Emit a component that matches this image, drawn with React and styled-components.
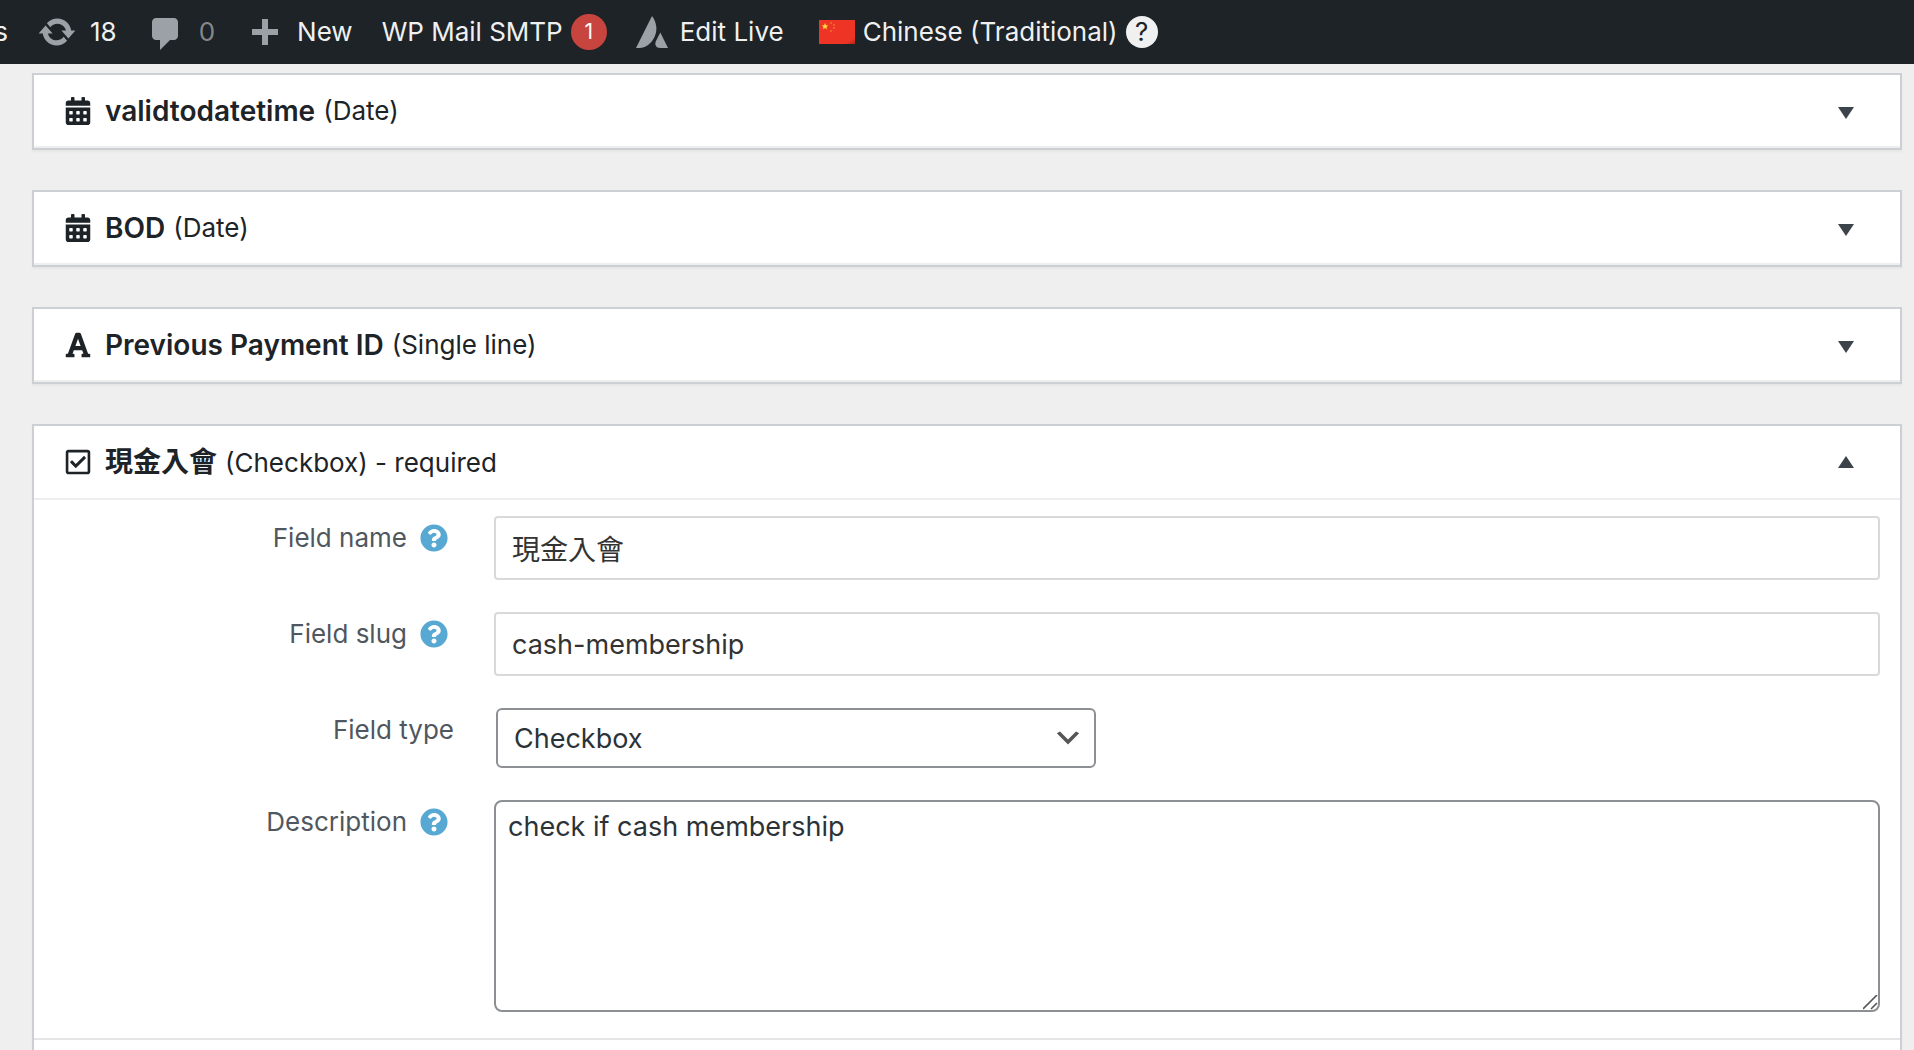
import { useState } from "react"
import styled, { createGlobalStyle, css } from "styled-components"
import { FaCalendarAlt, FaFont, FaQuestionCircle, FaRegCheckSquare } from "react-icons/fa"

const GlobalStyle = createGlobalStyle`
*, *::before, *::after {
  box-sizing: border-box;
}
body {
  margin: 0;
  background: #efefef;
  color: #1d2327;
  font-family: Inter, "Noto Sans CJK TC", sans-serif;
  font-size: 26px;
}
button, input, select, textarea {
  font-family: inherit;
}
`
const Page = styled.div`
display: flex;
flex-direction: column;
min-height: 100vh;
`
const AdminBar = styled.nav`
display: flex;
align-items: center;
gap: 29px;
height: 64px;
flex-shrink: 0;
background: #1d2327;
overflow: hidden;
white-space: nowrap;
`
const BarLink = styled.a`
display: flex;
align-items: center;
gap: ${({ $gap }) => $gap || 13}px;
color: ${({ $dim }) => ($dim ? "#84878b" : "#f0f0f1")};
line-height: 38px;
text-decoration: none;
`
const CutLink = styled(BarLink)`
justify-content: flex-end;
width: 8px;
overflow: hidden;
`
const BarIcon = styled.svg`
width: ${({ $size }) => $size || 40}px;
height: ${({ $size }) => $size || 40}px;
fill: #9ca1a7;
`
const Badge = styled.span`
width: 36px;
height: 36px;
border-radius: 50%;
background: #c8453f;
color: #fff;
font-size: 21px;
line-height: 36px;
text-align: center;
`
const Flag = styled.svg`
width: 36px;
height: 24px;
margin-left: 6px;
`
const BarHelp = styled.span`
width: 32px;
height: 32px;
border-radius: 50%;
background: #f0f0f1;
color: #1d2327;
line-height: 32px;
text-align: center;
`
const Fields = styled.main`
display: flex;
flex-direction: column;
flex-grow: 1;
gap: 40px;
padding: 9px 12px 0 32px;
`
const Card = styled.section`
border: 2px solid #ccd0d4;
background: #fff;
box-shadow: 0 2px 2px rgba(0, 0, 0, 0.04);
${({ $open }) => $open && css`
  flex-grow: 1;
  border-bottom: none;
`}
`
const CardHeader = styled.button`
display: flex;
align-items: center;
width: 100%;
height: ${({ $open }) => ($open ? 74 : 73)}px;
padding: 0 46px 0 30px;
border: none;
border-bottom: 2px solid #eee;
background: none;
color: #1d2327;
font-size: 26px;
text-align: left;
cursor: pointer;
`
const TypeIcon = styled.span`
display: flex;
margin-right: 13px;
font-size: 28px;
`
const CardTitle = styled.strong`
margin-right: 8px;
font-size: 28px;
font-weight: 600;
line-height: 36px;
`
const Arrow = styled.svg`
width: 16px;
height: 16px;
margin-left: auto;
fill: #3c434a;
`
const Row = styled.div`
display: flex;
align-items: flex-start;
gap: 40px;
padding: 16px 20px 16px 0;
`
const LastRow = styled(Row)`
padding-bottom: 26px;
border-bottom: 2px solid #e5e5e5;
`
const LabelCell = styled.div`
display: flex;
align-items: center;
justify-content: flex-end;
gap: 13px;
width: 420px;
padding-top: 4px;
flex-shrink: 0;
color: #50575e;
line-height: 36px;
`
const Help = styled.button`
display: flex;
margin-right: 6px;
padding: 0;
border: none;
background: none;
color: #57a8d2;
font-size: 28px;
`
const TextInput = styled.input`
flex: 1;
min-width: 0;
height: 64px;
padding: 0 16px;
border: 2px solid #d9d9d9;
border-radius: 4px;
color: #333;
font-size: ${({ $cjk }) => ($cjk ? 28 : 27)}px;
`
const chevron = `url("data:image/svg+xml,%3Csvg xmlns='http://www.w3.org/2000/svg' viewBox='0 0 20 20'%3E%3Cpath d='M5 6l5 5 5-5 2 1-7 7-7-7 2-1z' fill='%23555'/%3E%3C/svg%3E")`
const Select = styled.select`
width: 600px;
height: 60px;
margin-left: 2px;
padding: 0 48px 0 16px;
border: 2px solid #8c8f94;
border-radius: 6px;
appearance: none;
background: #fff ${chevron} no-repeat right 10px center / 32px 32px;
color: #2c3338;
font-size: 27px;
`
const grip = `url("data:image/svg+xml,%3Csvg xmlns='http://www.w3.org/2000/svg' viewBox='0 0 15 15'%3E%3Cpath d='M0 14L14 0M8 14L14 8' stroke='%23555' stroke-width='1.6'/%3E%3C/svg%3E")`
const TextArea = styled.textarea`
flex: 1;
min-width: 0;
height: 212px;
padding: 5px 12px;
border: 2px solid #8c8f94;
border-radius: 8px;
color: #2c3338;
font-size: 27px;
line-height: 40px;
resize: vertical;
&::-webkit-resizer {
  background: ${grip} no-repeat left top / 15px 15px;
}
`

const UpdateIcon = () => (
    <BarIcon viewBox="0 0 20 20">
        <path d="M10.2 3.28c3.53 0 6.43 2.61 6.92 6h2.08l-3.5 4-3.5-4h2.32c-.45-1.97-2.21-3.45-4.32-3.45-1.45 0-2.73.71-3.54 1.78L4.95 5.66C6.23 4.2 8.11 3.28 10.2 3.28zM9.8 16.72c-3.52 0-6.43-2.61-6.92-6H.8l3.5-4c1.17 1.33 2.33 2.67 3.5 4H5.48c.45 1.97 2.21 3.45 4.32 3.45 1.45 0 2.73-.71 3.54-1.78l1.71 1.95c-1.28 1.46-3.15 2.38-5.25 2.38z" />
    </BarIcon>
)
const CommentIcon = () => (
    <BarIcon viewBox="0 -1 20 20">
        <path d="M5 2h9c1.1 0 2 .9 2 2v7c0 1.1-.9 2-2 2h-2l-5 5v-5H5c-1.1 0-2-.9-2-2V4c0-1.1.9-2 2-2z" />
    </BarIcon>
)
const PlusIcon = () => (
    <BarIcon viewBox="0 -2 20 20">
        <path d="M17 6.500v3h-5v5H9v-5H4v-3h5v-5h3v5h5z" />
    </BarIcon>
)
const BladeIcon = () => (
    <BarIcon viewBox="0 0 32 32" $size={32}>
        <path d="M16 0C20.500 6 22 14 18.500 21C15.500 27.500 9.500 32 3.500 32H0z" />
        <path d="M24.300 16.500L32 32H24C20 32 18.300 28.500 20 25z" />
    </BarIcon>
)
const ChinaFlag = () => (
    <Flag viewBox="0 0 36 24">
        <defs>
            <linearGradient id="flagShade" x1="0" y1="0" x2="1" y2="1">
                <stop offset="0.85" stopColor="#ee3424" />
                <stop offset="1" stopColor="#b3261b" />
            </linearGradient>
        </defs>
        <rect width="36" height="24" fill="url(#flagShade)" />
        <path d="M6 3l1 2.200 2.300.2-1.800 1.500.6 2.300L6 8l-2.100 1.200.6-2.300-1.800-1.500L5 5.200z" fill="#ffd83b" />
        <g fill="#f0702a">
            <circle cx="12" cy="3" r="1" />
            <circle cx="15" cy="5" r="1" />
            <circle cx="15" cy="8" r="1" />
            <circle cx="12" cy="11" r="1" />
        </g>
    </Flag>
)

const FieldCard = ({ icon, title, info, open, onToggle, children }) => (
    <Card $open={open}>
        <CardHeader type="button" aria-expanded={!!open} $open={open} onClick={onToggle}>
            <TypeIcon>{icon}</TypeIcon>
            <CardTitle>{title}</CardTitle>
            <span>{info}</span>
            <Arrow viewBox="0 0 16 16">
                <path d={open ? "M0 14h16L8 2z" : "M0 4h16L8 16z"} />
            </Arrow>
        </CardHeader>
        {open && children}
    </Card>
)
const FieldLabel = ({ htmlFor, help, children }) => (
    <LabelCell>
        <label htmlFor={htmlFor}>{children}</label>
        {help && <Help type="button" aria-label={help}><FaQuestionCircle /></Help>}
    </LabelCell>
)

const App = () => {
    const [open, setOpen] = useState(true)
    return (
        <Page>
            <GlobalStyle />
            <AdminBar>
                <CutLink href="#">s</CutLink>
                <BarLink href="#"><UpdateIcon />18</BarLink>
                <BarLink href="#" $dim><CommentIcon />0</BarLink>
                <BarLink href="#"><PlusIcon />New</BarLink>
                <BarLink href="#" $gap={8}>WP Mail SMTP<Badge>1</Badge></BarLink>
                <BarLink href="#" $gap={12}><BladeIcon />Edit Live</BarLink>
                <BarLink href="#" $gap={8}><ChinaFlag />Chinese (Traditional)<BarHelp>?</BarHelp></BarLink>
            </AdminBar>
            <Fields>
                <FieldCard icon={<FaCalendarAlt />} title="validtodatetime" info="(Date)" />
                <FieldCard icon={<FaCalendarAlt />} title="BOD" info="(Date)" />
                <FieldCard icon={<FaFont />} title="Previous Payment ID" info="(Single line)" />
                <FieldCard
                    icon={<FaRegCheckSquare />}
                    title="現金入會"
                    info="(Checkbox) - required"
                    open={open}
                    onToggle={() => setOpen(!open)}
                >
                    <Row>
                        <FieldLabel htmlFor="name" help="About the field name">Field name</FieldLabel>
                        <TextInput id="name" defaultValue="現金入會" $cjk />
                    </Row>
                    <Row>
                        <FieldLabel htmlFor="slug" help="About the field slug">Field slug</FieldLabel>
                        <TextInput id="slug" defaultValue="cash-membership" />
                    </Row>
                    <Row>
                        <FieldLabel htmlFor="type">Field type</FieldLabel>
                        <Select id="type" defaultValue="Checkbox">
                            <option>Checkbox</option>
                            <option>Date</option>
                            <option>Single line</option>
                        </Select>
                    </Row>
                    <LastRow>
                        <FieldLabel htmlFor="description" help="About the description">Description</FieldLabel>
                        <TextArea id="description" defaultValue="check if cash membership" />
                    </LastRow>
                </FieldCard>
            </Fields>
        </Page>
    )
}
export default App
